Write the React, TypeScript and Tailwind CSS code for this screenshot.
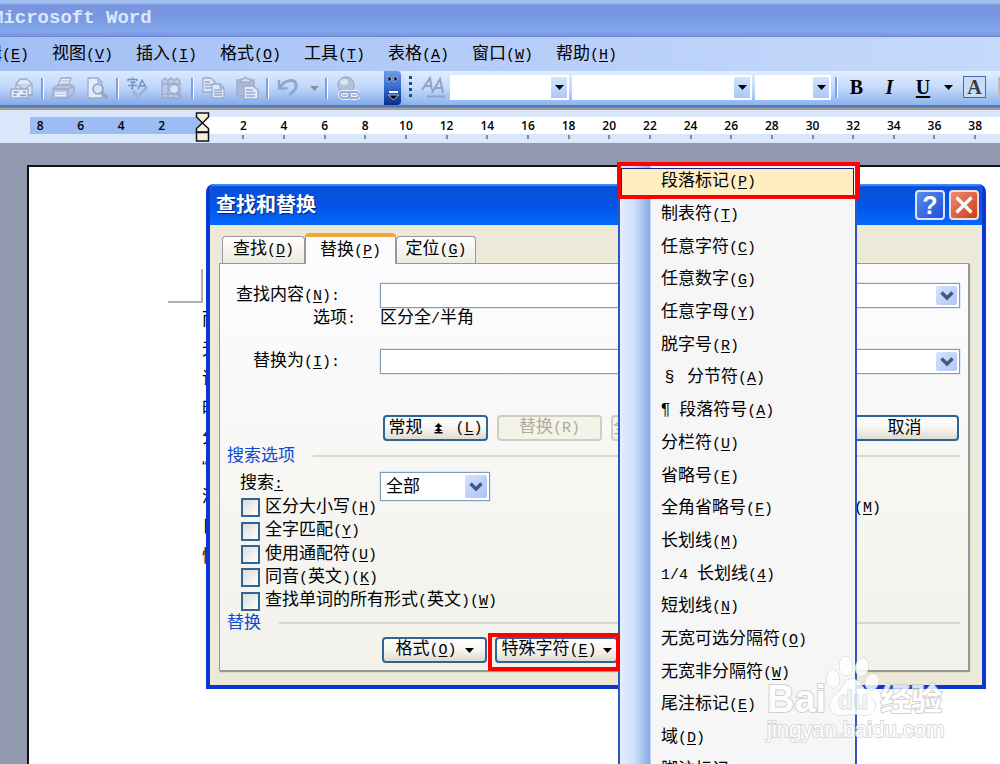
import React from "react";

const cjk = "font-['Liberation_Sans','Noto_Sans_CJK_SC',sans-serif]";

/** Mixed Chinese / half-width text; "&" marks the access key that follows it. */
function T({ children }: { children: string }) {
  const runs = children.match(/[\x20-\x7e]+|[^\x20-\x7e]+/g) ?? [];
  return (
    <span className="whitespace-pre">
      {runs.map((run, i) => {
        if (run === "§") return <span key={i} className="inline-block w-[17px] text-center">§</span>;
        if (!/^[\x20-\x7e]/.test(run)) return <span key={i}>{run}</span>;
        const at = run.indexOf("&");
        return (
          <span key={i} className="font-['Liberation_Mono',monospace] text-[15px]">
            {at < 0 ? (
              run
            ) : (
              <>
                {run.slice(0, at)}
                <u className="underline decoration-1 underline-offset-2">{run[at + 1]}</u>
                {run.slice(at + 2)}
              </>
            )}
          </span>
        );
      })}
    </span>
  );
}

function Down({ className = "" }: { className?: string }) {
  return (
    <svg viewBox="0 0 9 5" className={`h-[5px] w-[9px] shrink-0 ${className}`}>
      <path d="M0 0h9L4.500 5z" fill="currentColor" />
    </svg>
  );
}

const menus = ["编辑(&E)", "视图(&V)", "插入(&I)", "格式(&O)", "工具(&T)", "表格(&A)", "窗口(&W)", "帮助(&H)"];

const symbols = [
  "段落标记(&P)", "制表符(&T)", "任意字符(&C)", "任意数字(&G)", "任意字母(&Y)", "脱字号(&R)",
  "§ 分节符(&A)", "¶ 段落符号(&A)", "分栏符(&U)", "省略号(&E)", "全角省略号(&F)", "长划线(&M)",
  "1/4 长划线(&4)", "短划线(&N)", "无宽可选分隔符(&O)", "无宽非分隔符(&W)", "尾注标记(&E)", "域(&D)", "脚注标记(&F)",
];

const checks = ["区分大小写(&H)", "全字匹配(&Y)", "使用通配符(&U)", "同音(英文)(&K)", "查找单词的所有形式(英文)(&W)"];

const docLines = ["而", "无", "请", "时", "分", "“", "满", "日", "情"];

function Sep() {
  return (
    <span className="flex w-[7px] shrink-0 justify-center">
      <span className="h-[21px] w-[3px] border-r border-white bg-[#7ba0e0]" />
    </span>
  );
}

function Tool({ name, wide, children }: { name: string; wide?: boolean; children: React.ReactNode }) {
  return (
    <button aria-label={name} className={`flex shrink-0 items-center justify-center ${wide ? "w-9" : "w-[34px]"}`}>
      <svg viewBox="0 0 24 24" className="size-6 shrink-0" fill="none" stroke="#9aabcd" strokeWidth="1.300" strokeLinejoin="round">
        {children}
      </svg>
    </button>
  );
}

const lens = (
  <>
    <circle cx="13" cy="13" r="5" fill="#d5e2f6" stroke="#8e9fc4" strokeWidth="1.600" />
    <path d="M16.800 16.800l5 5" stroke="#94a3c2" strokeWidth="3" strokeLinecap="round" />
  </>
);

function StandardToolbar() {
  return (
    <div className="flex h-full w-[384px] shrink-0 items-center pl-[5px]">
      <Tool name="邮件">
        <path d="M6 8l4-5h7l5 5v11H6z" fill="#dde6f5" />
        <path d="M6 8l8 6 8-6" fill="#c6d3ea" />
        <rect x="1" y="13" width="17" height="9" fill="#e3ebf8" />
        <path d="M3.500 16h5M3.500 19h3M10 19.500h6M13 16h3" stroke="#8598bf" />
      </Tool>
      <Sep />
      <Tool name="打印">
        <path d="M7 10L10 2h10l-3 9" fill="#e6edf9" />
        <path d="M10.500 5h7M9.500 8h7" strokeWidth="1" />
        <path d="M2 12l5-3h14l2 2v6l-6 5H2z" fill="#b7c6e2" />
        <path d="M2 13h15l5-3M17 13v8" />
        <path d="M4 17h11M4 19.500h11" stroke="#edf2fb" strokeWidth="1.500" />
      </Tool>
      <Tool name="打印预览">
        <path d="M3 2h10l4 4v16H3z" fill="#e3ebf8" />
        <path d="M13 2v4h4" />
        {lens}
      </Tool>
      <Sep />
      <Tool name="拼写和语法">
        <path d="M2 5V3.500h9V5M6.500 1.500v2M4 6h5L6.500 8v4.500H5M2 9.500h9M12 13l4-9 5 9M13.500 10h6" stroke="#7790c4" strokeWidth="1.500" />
        <path d="M7 15l5 6 9-10" stroke="#a4b2cf" strokeWidth="3" />
      </Tool>
      <Tool name="信息检索">
        <path d="M2 5l3-3 3 3v17H2zM8 4l3-2 3 2v18H8zM14 5l3-3 3 3v17h-6z" fill="#bccae3" />
        <path d="M2 8h6M2 18h6M8 8h6M14 8h6M8 18h6" />
        <circle cx="14" cy="13" r="4.500" fill="#dbe6f8" />
        <path d="M17 17l5 5" strokeWidth="3" />
      </Tool>
      <Sep />
      <Tool name="复制">
        <path d="M2 2h8l4 4v10H2z" fill="#dce6f7" />
        <path d="M4 6h5M4 9h7M4 12h7" />
        <path d="M11 8h8l4 4v10H11z" fill="#e1e9f7" />
        <path d="M19 8v4h4M13 14h8M13 16.500h8M13 19h8" />
      </Tool>
      <Tool name="粘贴">
        <path d="M2 4h17v16H2z" fill="#a9b9d8" />
        <path d="M6 6V3h3l1.500-2L12 3h3v3z" fill="#dfe7f5" />
        <path d="M9 10h9l5 4v9H9z" fill="#e2eaf8" />
        <path d="M11 14h7M11 17h9M11 20h9" />
      </Tool>
      <Sep />
      <Tool name="撤消">
        <path d="M3 4v8.500h8.500" stroke="#8fa4ce" strokeWidth="2.500" />
        <path d="M4 11.500C8 4.500 18 2 20 8c1.200 4.500-2.500 8-7 11" stroke="#93a6cd" strokeWidth="3" />
      </Tool>
      <button aria-label="撤消列表" className="flex w-[18px] justify-center text-[#8b8f9c]">
        <Down />
      </button>
      <Sep />
      <Tool name="超链接" wide>
        <circle cx="10" cy="9" r="8" fill="#b2c1dd" />
        <ellipse cx="8" cy="6" rx="4" ry="3" fill="#d9e3f4" stroke="none" />
        <rect x="4" y="16" width="10" height="6" rx="3" stroke="#edf2fb" strokeWidth="4" />
        <rect x="13" y="16" width="10" height="6" rx="3" stroke="#edf2fb" strokeWidth="4" />
        <rect x="4" y="16" width="10" height="6" rx="3" strokeWidth="1.800" />
        <rect x="13" y="16" width="10" height="6" rx="3" strokeWidth="1.800" />
      </Tool>
    </div>
  );
}

function Combo({ name, width }: { name: string; width: string }) {
  return (
    <label className={`flex h-[25px] shrink-0 items-center bg-white p-[2px] ${width}`}>
      <select aria-label={name} className="h-full min-w-0 flex-1 appearance-none bg-white" />
      <span className="flex h-full w-4 items-center justify-center bg-linear-to-b from-[#d3e4fc] to-[#aac8f5]">
        <Down />
      </span>
    </label>
  );
}

function FormatToolbar() {
  return (
    <div className="flex h-full min-w-0 flex-1 items-center overflow-hidden rounded-l-sm bg-linear-to-b from-[#e1eefe] via-[#c3dafa] to-[#8db2ec] pb-[2px]">
      <svg viewBox="0 0 4 22" className="ml-[5px] h-[22px] w-1 shrink-0" fill="#24478f">
        <path d="M0 0h3v3H0zM0 6h3v3H0zM0 12h3v3H0zM0 18h3v3H0z" />
      </svg>
      <button aria-label="样式和格式" className="ml-2 h-[22px] w-[25px] shrink-0">
        <svg viewBox="0 0 25 22" className="h-full w-full" fill="none" stroke="#8ea3cc" strokeWidth="2">
          <path d="M1 14L9 2l2 12M4 10h7M11 17L19 3l3 14M14 12h8" />
          <path d="M6 20.500h18" />
        </svg>
      </button>
      <div className="ml-1 flex shrink-0 gap-[3px]">
        <Combo name="样式" width="w-[119px]" />
        <Combo name="字体" width="w-[180px]" />
        <Combo name="字号" width="w-[76px]" />
      </div>
      <span className="ml-[2px] flex shrink-0">
        <Sep />
      </span>
      <div className="flex shrink-0 items-center font-['Liberation_Serif',serif] text-[20px] leading-6 font-bold">
        <button className="w-[33px]">B</button>
        <button className="w-[33px] italic">I</button>
        <button className="w-[34px] underline decoration-2 underline-offset-2">U</button>
        <button aria-label="下划线样式" className="flex w-4 justify-center">
          <Down />
        </button>
        <button className="ml-[7px] flex h-[22px] w-[23px] items-center justify-center border border-[#3e6cb4] bg-[#c9dcf8] text-[#3c3c3c]">A</button>
        <button aria-label="字符底纹" className="ml-3 h-5 w-5 bg-[#b9bcc2]" />
      </div>
    </div>
  );
}

function Ticks({ values, className }: { values: number[]; className: string }) {
  return (
    <div className={`flex shrink-0 ${className}`}>
      {values.map((v) => (
        <div key={v} className="flex flex-1 flex-col items-center">
          <span className="h-[18px] leading-[17px]">{v}</span>
          <span className="h-1 w-[2px] bg-[#858a94]" />
        </div>
      ))}
    </div>
  );
}

function Ruler() {
  return (
    <div className="relative flex h-[33px] shrink-0 overflow-hidden bg-[#dae7fb] pt-[7px] pl-[30px] font-['Open_Sans',sans-serif] text-[12px] font-semibold">
      <div className="h-[17px] w-[172px] shrink-0 bg-[#9ebcf4]">
        <div className="-ml-[10px] flex h-[17px] w-[162px]">
          {[8, 6, 4, 2].map((v) => (
            <span key={v} className="flex-1 text-center leading-[17px]">{v}</span>
          ))}
        </div>
      </div>
      <div className="h-[17px] min-w-0 flex-1 bg-white pl-[21px]">
        <Ticks className="w-[813px]" values={Array.from({ length: 20 }, (_, i) => 2 * i + 2)} />
      </div>
      <svg viewBox="0 0 15 31" className="absolute top-[2px] left-[195px] h-[31px] w-[15px]" fill="#f5f1dc" stroke="#111" strokeWidth="1.500">
        <path d="M1.500 1h12v4L7.500 11 1.500 5zM7.500 11l6 5.500V20h-12v-3.500z" />
        <path d="M1.500 20.500h12V29h-12z" />
      </svg>
    </div>
  );
}

const Chevron = () => (
  <svg viewBox="0 0 14 10" className="h-[10px] w-[14px]" fill="none" stroke="#44597f" strokeWidth="3.400">
    <path d="M1.500 1.500L7 7l5.500-5.500" />
  </svg>
);

function DropField({ id }: { id: string }) {
  return (
    <div className="flex h-[25px] min-w-0 flex-1 border border-[#7f9db9] bg-white p-[2px] shadow-[0_0_1px_#7f9db9]">
      <input id={id} className="min-w-0 flex-1 bg-white px-1 outline-none" />
      <button aria-label="展开" className="flex w-[21px] items-center justify-center rounded-xs bg-linear-to-br from-[#d6e2fd] to-[#b1c6f8]">
        <Chevron />
      </button>
    </div>
  );
}

const xpButton =
  "flex h-[26px] shrink-0 items-center justify-center rounded-sm border-2 border-[#2f6595] bg-linear-to-b from-white via-[#f6f5f0] to-[#dedbd0] leading-5";
const xpDisabled =
  "flex h-[26px] shrink-0 items-center rounded-sm border-2 border-[#d0cfbf] bg-[#f4f3e9] leading-5 text-[#aeab9b]";

function Section({ children }: { children: string }) {
  return (
    <div className="flex items-center gap-[18px] pr-2 pl-[7px]">
      <h3 className="text-[#1048d0]">{children}</h3>
      <span className="h-[2px] flex-1 bg-[#d9d8ca]" />
    </div>
  );
}

function Dialog() {
  return (
    <section
      role="dialog"
      aria-label="查找和替换"
      className={`absolute top-[184px] left-[206px] w-[780px] overflow-hidden rounded-t-lg border-x-4 border-b-4 border-[#0a35cf] bg-[#ece9d8] text-[17px] leading-5 ${cjk}`}
    >
      <header className="flex h-[41px] items-center bg-linear-to-b from-[#0a4fd8] via-[#0453e6] to-[#0368fc] pr-[3px] pl-[6px] shadow-[inset_0_2px_1px_#3f8bf8]">
        <h2 className="flex-1 text-[20px] font-bold text-white [text-shadow:1px_1px_1px_#0a1f6b]">查找和替换</h2>
        <div className="flex gap-1">
          <button aria-label="帮助" className="flex size-[30px] items-center justify-center rounded-sm border-2 border-[#dbe6fb] bg-linear-to-br from-[#5a8bf0] to-[#1f4fd6] font-['Liberation_Sans',sans-serif] text-[25px] font-bold text-white">
            ?
          </button>
          <button aria-label="关闭" className="flex size-[30px] items-center justify-center rounded-sm border-2 border-[#f3dcd6] bg-linear-to-br from-[#ee8a6c] to-[#cc3a12]">
            <svg viewBox="0 0 18 18" className="size-[18px]" stroke="white" strokeWidth="3.200">
              <path d="M1.500 1.500l15 15M16.500 1.500l-15 15" />
            </svg>
          </button>
        </div>
      </header>

      <div className="pt-2 pr-[13px] pb-[14px] pl-[9px]">
        <div role="tablist" className="flex items-end pl-[3px]">
          <button role="tab" className="h-[27px] w-[83px] rounded-t-sm border border-b-0 border-[#919b9c] bg-linear-to-b from-white to-[#eceae2]">
            <T>查找(&D)</T>
          </button>
          <button role="tab" aria-selected="true" className="-mb-px h-[31px] w-[91px] rounded-t-sm border-x border-t-4 border-x-[#919b9c] border-t-[#f0a83c] bg-[#fcfcfe]">
            <T>替换(&P)</T>
          </button>
          <button role="tab" className="h-[27px] w-20 rounded-t-sm border border-b-0 border-[#919b9c] bg-linear-to-b from-white to-[#eceae2]">
            <T>定位(&G)</T>
          </button>
        </div>

        <form className="border border-[#919b9c] bg-linear-to-b from-[#fcfcfe] to-[#f2f1ea] pt-[19px] pb-[7px] shadow-[1px_1px_1px_#9a9a90]" onSubmit={(e) => e.preventDefault()}>
          <div className="flex items-center pr-2">
            <label htmlFor="find" className="w-[120px] text-right"><T>查找内容(&N):</T></label>
            <span className="w-10" />
            <DropField id="find" />
          </div>
          <div className="flex h-[22px] items-center">
            <span className="w-[136px] text-right"><T>选项:</T></span>
            <span className="pl-6"><T>区分全/半角</T></span>
          </div>
          <div className="mt-[19px] flex items-center pr-2">
            <label htmlFor="replace" className="w-[120px] text-right"><T>替换为(&I):</T></label>
            <span className="w-10" />
            <DropField id="replace" />
          </div>
          <div className="mt-[41px] flex gap-[9px] pr-[9px] pl-[163px]">
            <button className={`w-[105px] gap-3 ${xpButton}`}>
              <span>常规</span>
              <svg viewBox="0 0 9 11" className="h-[11px] w-[9px]">
                <path d="M4.500 0L8.500 4h-3v1.500l3 2.500h-3v1h3v1.500h-8V9h3V8h-3l3-2.500V4h-3z" fill="black" />
              </svg>
              <T>(&L)</T>
            </button>
            <button disabled className={`w-[105px] justify-center ${xpDisabled}`}><T>替换(R)</T></button>
            <button disabled className={`w-[105px] ${xpDisabled}`}>全</button>
            <button className={`ml-auto w-[109px] ${xpButton}`}>取消</button>
          </div>
          <div className="pt-[5px] pb-[6px]">
            <Section>搜索选项</Section>
          </div>
          <div className="flex items-start pl-5">
            <div className="w-[140px] shrink-0">
              <label htmlFor="scope" className="flex h-6 items-center"><T>搜索&:</T></label>
              <div className="flex h-[117px] flex-col">
                {checks.map((c) => (
                  <label key={c} className="flex flex-1 items-center gap-[5px]">
                    <input type="checkbox" className="ml-px size-[19px] shrink-0 appearance-none border-2 border-[#2f6595] bg-linear-to-br from-[#dcdcd7] to-white" />
                    <T>{c}</T>
                  </label>
                ))}
              </div>
            </div>
            <div className="flex h-[29px] w-[110px] border border-[#7f9db9] bg-white p-[2px] shadow-[0_0_1px_#7f9db9]">
              <select id="scope" className="min-w-0 flex-1 appearance-none bg-white pl-[3px]">
                <option>全部</option>
              </select>
              <span className="flex w-[22px] items-center justify-center rounded-xs bg-linear-to-br from-[#d6e2fd] to-[#a9c0f8]">
                <Chevron />
              </span>
            </div>
            <span className="ml-auto pt-[25px] pr-[87px]"><T>(&M)</T></span>
          </div>
          <Section>替换</Section>
          <div className="flex gap-2 pt-1 pl-[162px]">
            <button className={`w-[105px] gap-2 ${xpButton}`}><T>格式(&O)</T><Down /></button>
            <button className={`w-[123px] gap-[6px] ${xpButton}`}><T>特殊字符(&E)</T><Down /></button>
          </div>
        </form>
      </div>
    </section>
  );
}

function SymbolMenu() {
  return (
    <ul
      role="menu"
      className={`absolute top-[165px] left-[618px] flex h-[624px] w-[239px] flex-col border-2 border-t border-[#2c58bd] bg-[linear-gradient(to_right,#e3eefe_0,#cfe1fb_14px,#87abe5_30px,#f6f6f6_31px)] text-[17px] leading-5 ${cjk}`}
    >
      {symbols.map((s, i) => (
        <li key={s} role="none" className="flex min-h-0 flex-1 items-center">
          <button
            role="menuitem"
            className={
              i === 0
                ? "mr-px ml-px h-[29px] flex-1 border border-[#1c1c8c] bg-[#ffeec2] pl-[39px] text-left"
                : "flex-1 pl-[41px] text-left"
            }
          >
            <T>{s}</T>
          </button>
        </li>
      ))}
    </ul>
  );
}

function Watermark() {
  return (
    <div className="pointer-events-none absolute top-[655px] left-[767px] flex flex-col opacity-85 [paint-order:stroke_fill]">
      <div className="flex h-[62px] items-end text-white [-webkit-text-stroke:2px_#c8cacf]">
        <span className="font-['Liberation_Sans',sans-serif] text-[38px] leading-[36px] font-bold">Bai</span>
        <svg viewBox="0 0 54 62" className="h-[62px] w-[54px]" fill="white" stroke="#c8cacf">
          <ellipse cx="7" cy="24" rx="6.500" ry="9" />
          <ellipse cx="20" cy="11" rx="6.500" ry="9.500" />
          <ellipse cx="36" cy="12" rx="6.500" ry="9" transform="rotate(12 36 12)" />
          <ellipse cx="46" cy="27" rx="6.500" ry="8.500" transform="rotate(20 46 27)" />
          <path d="M26 24c7 0 10 7 14 12 5 6 10 10 9 17-1 6-6 8-12 7-8-1-13-1-20 0C9 61 4 58 4 51c0-8 6-11 11-17 3-5 5-10 11-10z" />
          <text x="27" y="54" textAnchor="middle" fontFamily="Liberation Sans" fontSize="25" fontWeight="bold" fill="#f1f1f3">du</text>
        </svg>
        <span className="font-['Noto_Sans_CJK_SC',sans-serif] text-[31px] leading-[40px] font-bold">经验</span>
      </div>
      <span className="font-['Liberation_Sans',sans-serif] text-[22px] leading-[26px] text-white [-webkit-text-stroke:2px_#d2d3d6]">jingyan.baidu.com</span>
    </div>
  );
}

export default function App() {
  return (
    <div className={`relative flex h-screen flex-col overflow-hidden bg-[#9199ae] text-black ${cjk}`}>
      <header className="flex h-[37px] shrink-0 items-center border-b border-[#6f86d6] bg-[linear-gradient(to_bottom,#a3c0f2_0,#a3c0f2_3px,#7894df_5px,#7a98e1_18px,#82a8ea_30px,#7a96e0_36px)]">
        <h1 className="-ml-2 font-['Liberation_Mono',monospace] text-[19px] font-bold text-[#dce8fc]">Microsoft Word</h1>
      </header>

      <nav className="flex h-[34px] shrink-0 items-center bg-linear-to-r from-[#a2bff4] via-[#b6cdf9] to-[#c5dafa] text-[17px]">
        <ul className="-ml-8 flex">
          {menus.map((m) => (
            <li key={m} className="w-[84px] shrink-0">
              <button><T>{m}</T></button>
            </li>
          ))}
        </ul>
      </nav>

      <div className="flex h-[36px] shrink-0 border-b-2 border-[#5179bd] bg-linear-to-b from-[#dcebfe] via-[#bdd5f9] to-[#85a9e6]">
        <StandardToolbar />
        <button aria-label="工具栏选项" className="mr-[3px] flex w-[17px] shrink-0 items-center justify-center rounded-r-sm bg-linear-to-b from-[#6c9bf0] via-[#3468cc] to-[#0b2c8c]">
          <svg viewBox="0 0 12 26" className="h-[26px] w-3 shrink-0" fill="black">
            <path d="M1 1v6l4-3zM7 1v6l4-3z" stroke="white" strokeWidth=".5" />
            <path d="M2 16h9v2H2z" fill="white" />
            <path d="M1.500 20h10l-5 5z" stroke="white" strokeWidth=".7" />
          </svg>
        </button>
        <FormatToolbar />
      </div>
      <div className="h-[3px] shrink-0 border-t border-[#7f8795] bg-[#a59e8a]" />
      <Ruler />

      <main className="flex min-h-0 flex-1 pt-[22px] pl-[27px]">
        <article className="flex-1 overflow-hidden border-t-2 border-l-2 border-[#111] bg-white">
          <div className="mt-[102px] ml-[139px] h-[34px] w-[35px] border-r-2 border-b-2 border-[#b0b0b0]" />
          <div className="mt-[2px] ml-[173px] flex h-[266px] flex-col text-[17px]">
            {docLines.map((l) => (
              <p key={l} className="flex flex-1 items-center">{l}</p>
            ))}
          </div>
        </article>
      </main>

      <Dialog />
      <SymbolMenu />
      <div className="pointer-events-none absolute top-[162px] left-[617px] h-[37px] w-[243px] border-4 border-[#fe0000]" />
      <div className="pointer-events-none absolute top-[633px] left-[488px] h-[38px] w-[132px] border-4 border-[#fe0000]" />
      <Watermark />
    </div>
  );
}
